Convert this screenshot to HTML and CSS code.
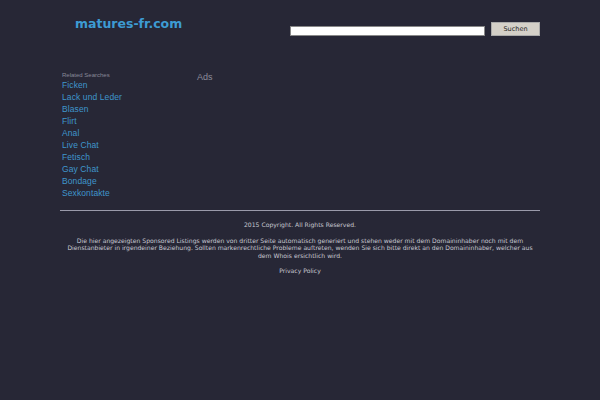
FILE: index.html
```html
<!DOCTYPE html>
<html lang="de">
<head>
    <meta charset="UTF-8">
    <title>matures-fr.com</title>
    <link rel="stylesheet" href="styles.css">
</head>
<body>
    <div class="container">
        <div class="header">
            <div class="logo">matures-fr.com</div>
            <form class="search">
                <input type="text" class="search-input">
                <button type="button" class="search-btn">Suchen</button>
            </form>
        </div>
        <div class="main">
            <div class="related">
                <div class="related-title">Related Searches</div>
                <ul class="links">
                    <li><a href="#">Ficken</a></li>
                    <li><a href="#">Lack und Leder</a></li>
                    <li><a href="#">Blasen</a></li>
                    <li><a href="#">Flirt</a></li>
                    <li><a href="#">Anal</a></li>
                    <li><a href="#">Live Chat</a></li>
                    <li><a href="#">Fetisch</a></li>
                    <li><a href="#">Gay Chat</a></li>
                    <li><a href="#">Bondage</a></li>
                    <li><a href="#">Sexkontakte</a></li>
                </ul>
            </div>
            <div class="ads">Ads</div>
        </div>
        <div class="footer">
            <p>2015 Copyright. All Rights Reserved.</p>
            <p>Die hier angezeigten Sponsored Listings werden von dritter Seite automatisch generiert und stehen weder mit dem Domaininhaber noch mit dem Dienstanbieter in irgendeiner Beziehung. Sollten markenrechtliche Probleme auftreten, wenden Sie sich bitte direkt an den Domaininhaber, welcher aus dem Whois ersichtlich wird.</p>
            <p><a href="#">Privacy Policy</a></p>
        </div>
    </div>
</body>
</html>
```

FILE: styles.css
```css
body {
    margin: 0;
    background-color: #272736;
    font-family: "DejaVu Sans", sans-serif;
}
.container {
    width: 480px;
    margin: 0 auto;
}
.header {
    display: flex;
    justify-content: space-between;
    height: 60px;
}
.logo {
    margin: 16px 0 0 15px;
    font-size: 12.5px;
    font-weight: bold;
    color: #3d9bd3;
}
.search {
    display: flex;
    align-items: flex-start;
    margin-top: 22px;
}
.search-input {
    width: 193px;
    height: 8px;
    margin: 4px 6px 0 0;
    padding: 0;
    border: 1px solid #888;
    background: #fff;
}
.search-btn {
    width: 49px;
    height: 14px;
    padding: 0;
    border: 1px solid #aaa;
    background-color: #d4d0c8;
    color: #222;
    font-family: "DejaVu Sans", sans-serif;
    font-size: 6.5px;
}
.main {
    display: flex;
    height: 150px;
}
.related {
    width: 135px;
    padding-left: 2px;
    margin-top: 12px;
}
.related-title {
    font-family: "Liberation Sans", Arial, sans-serif;
    font-size: 6px;
    color: #888896;
    margin-bottom: -1px;
}
.links {
    list-style: none;
    margin: 0;
    padding: 0;
}
.links li {
    height: 12px;
    line-height: 12px;
}
.links a {
    font-family: "Liberation Sans", Arial, sans-serif;
    font-size: 8.5px;
    letter-spacing: 0.1px;
    color: #3f96cc;
    text-decoration: none;
}
.ads {
    margin-top: 12px;
    font-family: "Liberation Sans", Arial, sans-serif;
    font-size: 9px;
    color: #8c8c9a;
}
.footer {
    border-top: 1px solid #9a9aaa;
    text-align: center;
    font-size: 6.1px;
    color: #c8c8d2;
    padding-top: 10px;
}
.footer p {
    margin: 0 0 8px 0;
    line-height: 7.5px;
}
.footer a {
    color: #c8c8d2;
    text-decoration: none;
}
```
